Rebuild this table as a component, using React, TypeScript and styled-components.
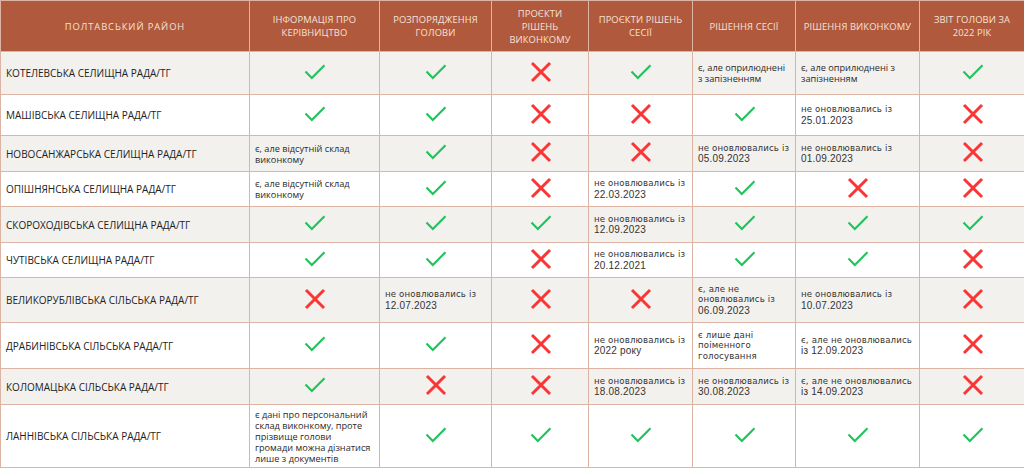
import React from "react";
import styled, { createGlobalStyle } from "styled-components";

const Global = createGlobalStyle`
  html, body { margin: 0; padding: 0; background: #ffffff; }
  body { font-family: "Open Sans", "Noto Sans", sans-serif; }
`;

const Table = styled.table`
  width: 1024px;
  table-layout: fixed;
  border-collapse: collapse;
  font-family: "Open Sans", "Noto Sans", sans-serif;
`;

const Col = styled.col<{ $w: number }>`
  width: ${(p) => p.$w}px;
`;

const HeadCell = styled.th<{ $wide?: boolean }>`
  height: 50px;
  background: #b0593c;
  color: #f6e2d8;
  font-size: 9.4px;
  font-weight: 400;
  line-height: 13px;
  text-align: center;
  vertical-align: middle;
  padding: 0 4px;
  border: 1px solid #ddb3a4;
  letter-spacing: ${(p) => (p.$wide ? "0.9px" : "0.1px")};
  white-space: nowrap;
  overflow: hidden;
`;

const Row = styled.tr<{ $h: number; $alt: boolean }>`
  height: ${(p) => p.$h}px;
  background: ${(p) => (p.$alt ? "#f3f1ee" : "#ffffff")};
`;

const NameCell = styled.td`
  border: 1px solid #ddb3a4;
  padding: 0 5px;
  font-size: 10px;
  color: #222222;
  text-transform: uppercase;
  white-space: nowrap;
  vertical-align: middle;
`;

const Cell = styled.td<{ $icon: boolean }>`
  border: 1px solid #ddb3a4;
  padding: 0 4px 0 5px;
  text-align: ${(p) => (p.$icon ? "center" : "left")};
  vertical-align: middle;
  color: #2a2a2a;
  overflow: hidden;
`;

const IconBox = styled.div`
  display: flex;
  justify-content: center;
  align-items: center;
  margin-top: -3px;
`;

const Note = styled.div`
  font-family: "Open Sans", "Noto Sans", sans-serif;
  font-size: 9.2px;
  line-height: 11px;
  color: #2a2a2a;
  white-space: nowrap;
`;

const Stale = styled.div`
  font-family: "DejaVu Sans", "Noto Sans", sans-serif;
  font-size: 8.6px;
  line-height: 10.5px;
  color: #333333;
  white-space: nowrap;
  letter-spacing: 0.15px;
`;

const DateText = styled.span`
  font-family: "Liberation Sans", "DejaVu Sans", sans-serif;
  font-size: 10px;
  line-height: 11px;
  letter-spacing: 0.2px;
`;

const Check = () => (
  <svg width="22" height="16" viewBox="0 0 22 16">
    <path d="M1.5 7.5 L7.8 14 L20.5 1.2" fill="none" stroke="#1fc35b" strokeWidth="2.1" />
  </svg>
);

const Cross = () => (
  <svg width="22" height="22" viewBox="0 0 22 22">
    <path d="M2 2 L20 20 M20 2 L2 20" fill="none" stroke="#fb3434" strokeWidth="3" />
  </svg>
);

type Val =
  | "y"
  | "n"
  | { note: string[] }
  | { stale: string[]; date?: string };

const cols: { title: string[]; w: number }[] = [
  { title: ["ПОЛТАВСЬКИЙ РАЙОН"], w: 249 },
  { title: ["ІНФОРМАЦІЯ ПРО", "КЕРІВНИЦТВО"], w: 130 },
  { title: ["РОЗПОРЯДЖЕННЯ", "ГОЛОВИ"], w: 112 },
  { title: ["ПРОЄКТИ", "РІШЕНЬ", "ВИКОНКОМУ"], w: 97 },
  { title: ["ПРОЄКТИ РІШЕНЬ", "СЕСІЇ"], w: 104 },
  { title: ["РІШЕННЯ СЕСІЇ"], w: 103 },
  { title: ["РІШЕННЯ ВИКОНКОМУ"], w: 124 },
  { title: ["ЗВІТ ГОЛОВИ ЗА", "2022 РІК"], w: 105 },
];

const ST = "не оновлювались із";

const rows: { name: string; h: number; vals: Val[] }[] = [
  {
    name: "Котелевська селищна рада/ТГ",
    h: 43,
    vals: [
      "y",
      "y",
      "n",
      "y",
      { note: ["є, але оприлюднені", "з запізненням"] },
      { note: ["є, але оприлюднені з", "запізненням"] },
      "y",
    ],
  },
  {
    name: "Машівська селищна рада/ТГ",
    h: 41,
    vals: ["y", "y", "n", "n", "y", { stale: [ST], date: "25.01.2023" }, "n"],
  },
  {
    name: "Новосанжарська селищна рада/ТГ",
    h: 36,
    vals: [
      { note: ["є, але відсутній склад", "виконкому"] },
      "y",
      "n",
      "n",
      { stale: [ST], date: "05.09.2023" },
      { stale: [ST], date: "01.09.2023" },
      "n",
    ],
  },
  {
    name: "Опішнянська селищна рада/ТГ",
    h: 35,
    vals: [
      { note: ["є, але відсутній склад", "виконкому"] },
      "y",
      "n",
      { stale: [ST], date: "22.03.2023" },
      "y",
      "n",
      "n",
    ],
  },
  {
    name: "Скороходівська селищна рада/ТГ",
    h: 36,
    vals: ["y", "y", "y", { stale: [ST], date: "12.09.2023" }, "y", "y", "y"],
  },
  {
    name: "Чутівська селищна рада/ТГ",
    h: 35,
    vals: ["y", "y", "n", { stale: [ST], date: "20.12.2021" }, "y", "y", "n"],
  },
  {
    name: "Великорублівська сільська рада/ТГ",
    h: 45,
    vals: [
      "n",
      { stale: [ST], date: "12.07.2023" },
      "n",
      "n",
      { stale: ["є, але не", "оновлювались із"], date: "06.09.2023" },
      { stale: [ST], date: "10.07.2023" },
      "n",
    ],
  },
  {
    name: "Драбинівська сільська рада/ТГ",
    h: 46,
    vals: [
      "y",
      "y",
      "n",
      { stale: [ST], date: "2022 року" },
      { stale: ["є лише дані", "поіменного", "голосування"] },
      { stale: ["є, але не оновлювались"], date: "із 12.09.2023" },
      "n",
    ],
  },
  {
    name: "Коломацька сільська рада/ТГ",
    h: 36,
    vals: [
      "y",
      "n",
      "n",
      { stale: [ST], date: "18.08.2023" },
      { stale: [ST], date: "30.08.2023" },
      { stale: ["є, але не оновлювались"], date: "із 14.09.2023" },
      "n",
    ],
  },
  {
    name: "Ланнівська сільська рада/ТГ",
    h: 63,
    vals: [
      {
        note: [
          "є дані про персональний",
          "склад виконкому, проте",
          "прізвище голови",
          "громади можна дізнатися",
          "лише з документів",
        ],
      },
      "y",
      "y",
      "y",
      "y",
      "y",
      "y",
    ],
  },
];

const renderVal = (v: Val) => {
  if (v === "y")
    return (
      <IconBox>
        <Check />
      </IconBox>
    );
  if (v === "n")
    return (
      <IconBox>
        <Cross />
      </IconBox>
    );
  if ("note" in v)
    return (
      <Note>
        {v.note.map((l, i) => (
          <div key={i}>{l}</div>
        ))}
      </Note>
    );
  return (
    <Stale>
      {v.stale.map((l, i) => (
        <div key={i}>{l}</div>
      ))}
      {v.date && <DateText>{v.date}</DateText>}
    </Stale>
  );
};

export default function App() {
  return (
    <>
      <Global />
      <Table>
        <colgroup>
          {cols.map((c, i) => (
            <Col key={i} $w={c.w} />
          ))}
        </colgroup>
        <thead>
          <tr>
            {cols.map((c, i) => (
              <HeadCell key={i} $wide={i === 0}>
                {c.title.map((t, j) => (
                  <div key={j}>{t}</div>
                ))}
              </HeadCell>
            ))}
          </tr>
        </thead>
        <tbody>
          {rows.map((r, i) => (
            <Row key={i} $h={r.h} $alt={i % 2 === 0}>
              <NameCell>{r.name}</NameCell>
              {r.vals.map((v, j) => (
                <Cell key={j} $icon={v === "y" || v === "n"}>
                  {renderVal(v)}
                </Cell>
              ))}
            </Row>
          ))}
        </tbody>
      </Table>
    </>
  );
}
